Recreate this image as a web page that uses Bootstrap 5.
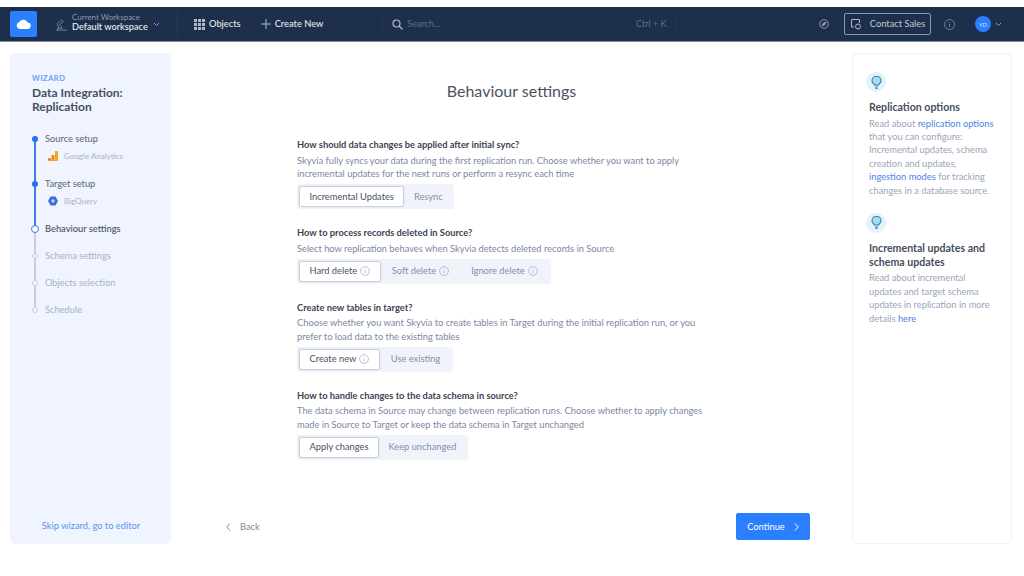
<!DOCTYPE html>
<html lang="en">
<head>
  <meta charset="UTF-8" />
  <meta name="viewport" content="width=device-width, initial-scale=1" />
  <title>Behaviour settings</title>
  <link href="https://cdn.jsdelivr.net/npm/bootstrap@5.3.3/dist/css/bootstrap.min.css" rel="stylesheet">
  <style>
    html, body { height: 100%; overflow: hidden; }
    body { font-family: Lato, "Liberation Sans", sans-serif; font-size: 9.3px; color: #3d4654; background: #fff; padding-top: 7px; }

    /* top bar */
    .top-bar { height: 35px; background: #1d2f4a; border-bottom: 1px solid #7d8a9e; color: #e4e9f0; padding-left: 10px; padding-right: 22px; }
    .logo-box { width: 27px; height: 26px; background: #2a7fff; border-radius: 2px; }
    .ws-block { margin-left: 18px; width: 123px; padding-right: 17px; border-right: 1px solid #2a3c58; height: 26px; }
    .ws-text { padding-bottom: 4px; }
    .ws-label { font-size: 8px; line-height: 9px; color: #8d9bb0; }
    .ws-name { font-size: 9.2px; line-height: 10px; font-weight: 500; color: #eef1f5; }
    .top-link { font-size: 9.3px; color: #e4e9f0; font-weight: 500; }
    .search-box { margin-left: 59px; width: 294px; height: 26px; border: 1px solid #24364f; border-radius: 3px; padding: 0 9px; color: #5f6f87; font-size: 9px; }
    .contact-btn { height: 22px; width: 87px; border: 1px solid #8b97a9; border-radius: 2px; color: #c3cbd6; font-size: 9.3px; margin-left: 15px; }
    .help-dot { margin-left: 13px; }
    .avatar-dot { width: 16px; height: 16px; border-radius: 50%; background: #2a7fff; color: #cfe0fb; font-size: 6px; margin-left: 20px; }

    /* page columns */
    .page-row { height: 502px; padding: 11px 12px 0 10px; }
    .wizard-side { width: 161px; background: #eff4fe; border-radius: 5px; padding: 21px 12px 11px 22px; }
    .wizard-tag { font-size: 7.5px; font-weight: 700; letter-spacing: .5px; color: #6e9df0; line-height: 9px; }
    .wizard-title { font-size: 12px; line-height: 14px; font-weight: 700; color: #474f5e; margin: 3px 0 0; }
    .help-side { width: 160px; border: 1px solid #f0f2f6; border-radius: 5px; padding: 18px 14px 0 16px; }

    /* stepper */
    .step-list { margin-top: 18px; position: relative; list-style: none; padding: 0 0 0 13px; }
    .step-list::before { content: ""; position: absolute; left: 2px; top: 7px; height: 90px; width: 2px; background: #3b7de8; }
    .step-list::after { content: ""; position: absolute; left: 2px; top: 97px; height: 80px; width: 2px; background: #c6cede; }
    .step-item { position: relative; height: 27px; font-size: 9.3px; line-height: 14px; color: #5b6474; }
    .step-item.has-sub { height: 45px; }
    .step-item.is-todo { color: #a9b3c6; }
    .step-item.is-now { font-weight: 500; color: #4a5260; }
    .step-dot { position: absolute; z-index: 1; left: -13px; top: 4px; width: 6px; height: 6px; border-radius: 50%; background: #2a70e8; }
    .is-now .step-dot { left: -14px; top: 3px; width: 8px; height: 8px; background: #fff; border: 1.5px solid #3b7de8; }
    .is-todo .step-dot { background: #eff4fe; border: 1px solid #c6cede; }
    .step-sub { font-size: 8px; line-height: 14px; color: #a9b3c6; margin-top: 3px; padding-left: 3px; gap: 6px; }
    .skip-link { font-size: 9.3px; color: #5c93f0; text-decoration: none; text-align: center; margin-left: -9px; }

    /* centre */
    .main-title { font-size: 16px; line-height: 20px; font-weight: 400; color: #4b5361; text-align: center; margin: 28px 0 0; }
    .form-area { padding-left: 126px; margin-top: 37px; }
    .q-block { margin-bottom: 17px; }
    .q-title { font-size: 9.3px; line-height: 13px; font-weight: 700; color: #3c4452; margin: 0 0 2.5px; }
    .q-text { font-size: 9.3px; line-height: 13.5px; color: #7d889f; margin: 0; width: 420px; }
    .seg-box { background: #f0f3f9; border-radius: 3px; padding: 2px; margin-top: 3.5px; }
    .seg-item { height: 21px; padding: 0 9.5px; font-size: 9.3px; color: #8490a8; background: transparent; border: 0; gap: 3px; }
    .seg-item.is-on { background: #fff; color: #4a5260; border: 1px solid #c9d0de; border-radius: 2px; box-shadow: 0 0 2px rgba(60,80,120,.15); }
    .seg-roomy .seg-item:not(.is-on) { padding: 0 11px; }
    .info-i { width: 10px; height: 10px; }
    .foot-row { margin-top: auto; padding: 0 42px 4px 55px; }
    .back-link { color: #7d889f; font-size: 9.3px; text-decoration: none; gap: 9px; }
    .next-btn { width: 74px; height: 27px; padding: 0; font-size: 9.3px; background: #2a7fff; border-color: #2a7fff; border-radius: 2px; gap: 9px; }

    /* help column */
    .tip-icon { width: 20px; height: 20px; border-radius: 50%; background: #e2f2fa; margin-left: -3px; }
    .help-title { font-size: 10.6px; line-height: 14px; font-weight: 700; color: #474f5e; margin: 8px 0 2.5px; }
    .help-text { font-size: 9.3px; line-height: 13.4px; color: #9aa5ba; margin: 0 0 16px; }
    .help-text a { color: #4f80e8; text-decoration: none; }
  </style>
</head>
<body>

  <header class="top-bar d-flex align-items-center">
    <div class="logo-box d-flex align-items-center justify-content-center flex-shrink-0">
      <svg width="15" height="10" viewBox="0 0 15 10"><path d="M4 10a3.5 3.5 0 0 1-.6-6.900A4.500 4.500 0 0 1 11.600 3.600 3.200 3.200 0 0 1 11.500 10z" fill="#fff"/></svg>
    </div>
    <div class="ws-block d-flex align-items-center flex-shrink-0">
      <svg class="flex-shrink-0" width="13" height="13" viewBox="0 0 14 14" fill="none" stroke="#8d9bb0" stroke-width=".8"><path d="M1 13h12M3 13V11h5M4 11 2.500 6 7 2l2 2-4 3 3 4"/></svg>
      <div class="ws-text flex-grow-1 ms-1">
        <div class="ws-label text-nowrap">Current Workspace</div>
        <div class="ws-name text-nowrap">Default workspace</div>
      </div>
      <svg class="flex-shrink-0" width="7" height="5" viewBox="0 0 7 5" fill="none" stroke="#8d9bb0"><path d="m1 1 2.500 2.500L6 1"/></svg>
    </div>
    <a class="top-link d-flex align-items-center text-decoration-none ms-2 ps-2 gap-1">
      <svg width="11" height="11" viewBox="0 0 11 11" fill="#aeb9c9"><path d="M0 0h3v3H0zM4 0h3v3H4zM8 0h3v3H8zM0 4h3v3H0zM4 4h3v3H4zM8 4h3v3H8zM0 8h3v3H0zM4 8h3v3H4zM8 8h3v3H8z"/></svg>
      Objects
    </a>
    <a class="top-link d-flex align-items-center text-decoration-none gap-1 ms-3 ps-1">
      <svg width="10" height="10" viewBox="0 0 10 10" stroke="#aeb9c9"><path d="M5 0v10M0 5h10"/></svg>
      Create New
    </a>
    <div class="search-box d-flex align-items-center flex-shrink-0">
      <svg class="me-1" width="11" height="11" viewBox="0 0 11 11" fill="none" stroke="#aeb9c9" stroke-width="1.200"><circle cx="4.500" cy="4.500" r="3.500"/><path d="m7 7 3.500 3.500"/></svg>
      <span>Search...</span>
      <span class="ms-auto">Ctrl + K</span>
    </div>
    <div class="ms-auto d-flex align-items-center">
      <svg width="10" height="10" viewBox="0 0 10 10" fill="none" stroke="#8b97a9"><circle cx="5" cy="5" r="4.300"/><path d="M3 7 4.200 4.200 7 3 5.800 5.800z" fill="#8b97a9"/></svg>
      <div class="contact-btn d-flex align-items-center justify-content-center gap-2">
        <svg width="12" height="12" viewBox="0 0 12 12" fill="none" stroke="#aeb9c9"><path d="M4 9H1.500V1.500h8V5"/><circle cx="8" cy="8.500" r="2.500"/></svg>
        Contact Sales
      </div>
      <svg class="help-dot" width="11" height="11" viewBox="0 0 11 11" fill="none" stroke="#6f7e94"><circle cx="5.500" cy="5.500" r="5"/><path d="M5.500 5v3M5.500 3v1"/></svg>
      <div class="avatar-dot d-flex align-items-center justify-content-center">YD</div>
      <svg class="ms-1" width="7" height="5" viewBox="0 0 7 5" fill="none" stroke="#8d9bb0"><path d="m1 1 2.500 2.500L6 1"/></svg>
    </div>
  </header>

  <div class="page-row d-flex">
    <aside class="wizard-side d-flex flex-column flex-shrink-0">
      <div class="wizard-tag">WIZARD</div>
      <h1 class="wizard-title">Data Integration:<br>Replication</h1>
      <ul class="step-list">
        <li class="step-item has-sub">
          <span class="step-dot"></span>Source setup
          <div class="step-sub d-flex align-items-center">
            <svg width="10" height="10" viewBox="0 0 10 10"><path d="M7 0h3v10H7z" fill="#f5a623"/><path d="M3.500 4h3v6h-3z" fill="#f08c1a"/><circle cx="1.500" cy="8.500" r="1.500" fill="#e37400"/></svg>
            Google Analytics
          </div>
        </li>
        <li class="step-item has-sub">
          <span class="step-dot"></span>Target setup
          <div class="step-sub d-flex align-items-center">
            <svg width="10" height="10" viewBox="0 0 10 10"><path d="M2.500.500h5L10 5 7.500 9.500h-5L0 5z" fill="#3b6fd8"/><circle cx="5" cy="5" r="1.800" fill="#b8cdf5"/></svg>
            BigQuery
          </div>
        </li>
        <li class="step-item is-now"><span class="step-dot"></span>Behaviour settings</li>
        <li class="step-item is-todo"><span class="step-dot"></span>Schema settings</li>
        <li class="step-item is-todo"><span class="step-dot"></span>Objects selection</li>
        <li class="step-item is-todo"><span class="step-dot"></span>Schedule</li>
      </ul>
      <a class="skip-link mt-auto">Skip wizard, go to editor</a>
    </aside>

    <main class="flex-grow-1 d-flex flex-column">
      <h2 class="main-title">Behaviour settings</h2>
      <div class="form-area">
        <section class="q-block">
          <h3 class="q-title">How should data changes be applied after initial sync?</h3>
          <p class="q-text">Skyvia fully syncs your data during the first replication run. Choose whether you want to apply incremental updates for the next runs or perform a resync each time</p>
          <div class="seg-box d-inline-flex">
            <button class="seg-item is-on d-flex align-items-center">Incremental Updates</button>
            <button class="seg-item d-flex align-items-center">Resync</button>
          </div>
        </section>
        <section class="q-block">
          <h3 class="q-title">How to process records deleted in Source?</h3>
          <p class="q-text">Select how replication behaves when Skyvia detects deleted records in Source</p>
          <div class="seg-box seg-roomy d-inline-flex">
            <button class="seg-item is-on d-flex align-items-center">Hard delete <svg class="info-i" viewBox="0 0 10 10" fill="none" stroke="#aab4c6" stroke-width=".8"><circle cx="5" cy="5" r="4.400"/><path d="M5 4.500v3M5 2.500v1"/></svg></button>
            <button class="seg-item d-flex align-items-center">Soft delete <svg class="info-i" viewBox="0 0 10 10" fill="none" stroke="#aab4c6" stroke-width=".8"><circle cx="5" cy="5" r="4.400"/><path d="M5 4.500v3M5 2.500v1"/></svg></button>
            <button class="seg-item d-flex align-items-center">Ignore delete <svg class="info-i" viewBox="0 0 10 10" fill="none" stroke="#aab4c6" stroke-width=".8"><circle cx="5" cy="5" r="4.400"/><path d="M5 4.500v3M5 2.500v1"/></svg></button>
          </div>
        </section>
        <section class="q-block">
          <h3 class="q-title">Create new tables in target?</h3>
          <p class="q-text">Choose whether you want Skyvia to create tables in Target during the initial replication run, or you prefer to load data to the existing tables</p>
          <div class="seg-box seg-roomy d-inline-flex">
            <button class="seg-item is-on d-flex align-items-center">Create new <svg class="info-i" viewBox="0 0 10 10" fill="none" stroke="#aab4c6" stroke-width=".8"><circle cx="5" cy="5" r="4.400"/><path d="M5 4.500v3M5 2.500v1"/></svg></button>
            <button class="seg-item d-flex align-items-center">Use existing</button>
          </div>
        </section>
        <section class="q-block">
          <h3 class="q-title">How to handle changes to the data schema in source?</h3>
          <p class="q-text">The data schema in Source may change between replication runs. Choose whether to apply changes made in Source to Target or keep the data schema in Target unchanged</p>
          <div class="seg-box d-inline-flex">
            <button class="seg-item is-on d-flex align-items-center">Apply changes</button>
            <button class="seg-item d-flex align-items-center">Keep unchanged</button>
          </div>
        </section>
      </div>
      <div class="foot-row d-flex align-items-center justify-content-between">
        <a class="back-link d-flex align-items-center">
          <svg width="5" height="8" viewBox="0 0 5 8" fill="none" stroke="#7d889f"><path d="M4 .500.800 4 4 7.500"/></svg>
          Back
        </a>
        <button class="btn btn-primary next-btn d-flex align-items-center justify-content-center">
          Continue
          <svg width="5" height="8" viewBox="0 0 5 8" fill="none" stroke="#fff"><path d="M1 .500 4.200 4 1 7.500"/></svg>
        </button>
      </div>
    </main>

    <aside class="help-side flex-shrink-0">
      <div class="tip-icon d-flex align-items-center justify-content-center">
        <svg width="11" height="13" viewBox="0 0 11 13" fill="#a6dcec" stroke="#2b7f9e" stroke-width="1.100"><path d="M3.500 9C2.800 7.500 1 7 1 4.800a4.500 4.500 0 0 1 9 0C10 7 8.200 7.500 7.500 9z"/><path d="M4 11h3M4.500 12.500h2"/></svg>
      </div>
      <h4 class="help-title">Replication options</h4>
      <p class="help-text">Read about <a href="#">replication options</a> that you can configure: Incremental updates, schema creation and updates,<br><a href="#">ingestion modes</a> for tracking changes in a database source.</p>
      <div class="tip-icon d-flex align-items-center justify-content-center">
        <svg width="11" height="13" viewBox="0 0 11 13" fill="#a6dcec" stroke="#2b7f9e" stroke-width="1.100"><path d="M3.500 9C2.800 7.500 1 7 1 4.800a4.500 4.500 0 0 1 9 0C10 7 8.200 7.500 7.500 9z"/><path d="M4 11h3M4.500 12.500h2"/></svg>
      </div>
      <h4 class="help-title">Incremental updates and schema updates</h4>
      <p class="help-text">Read about incremental updates and target schema updates in replication in more details <a href="#">here</a></p>
    </aside>
  </div>

</body>
</html>
